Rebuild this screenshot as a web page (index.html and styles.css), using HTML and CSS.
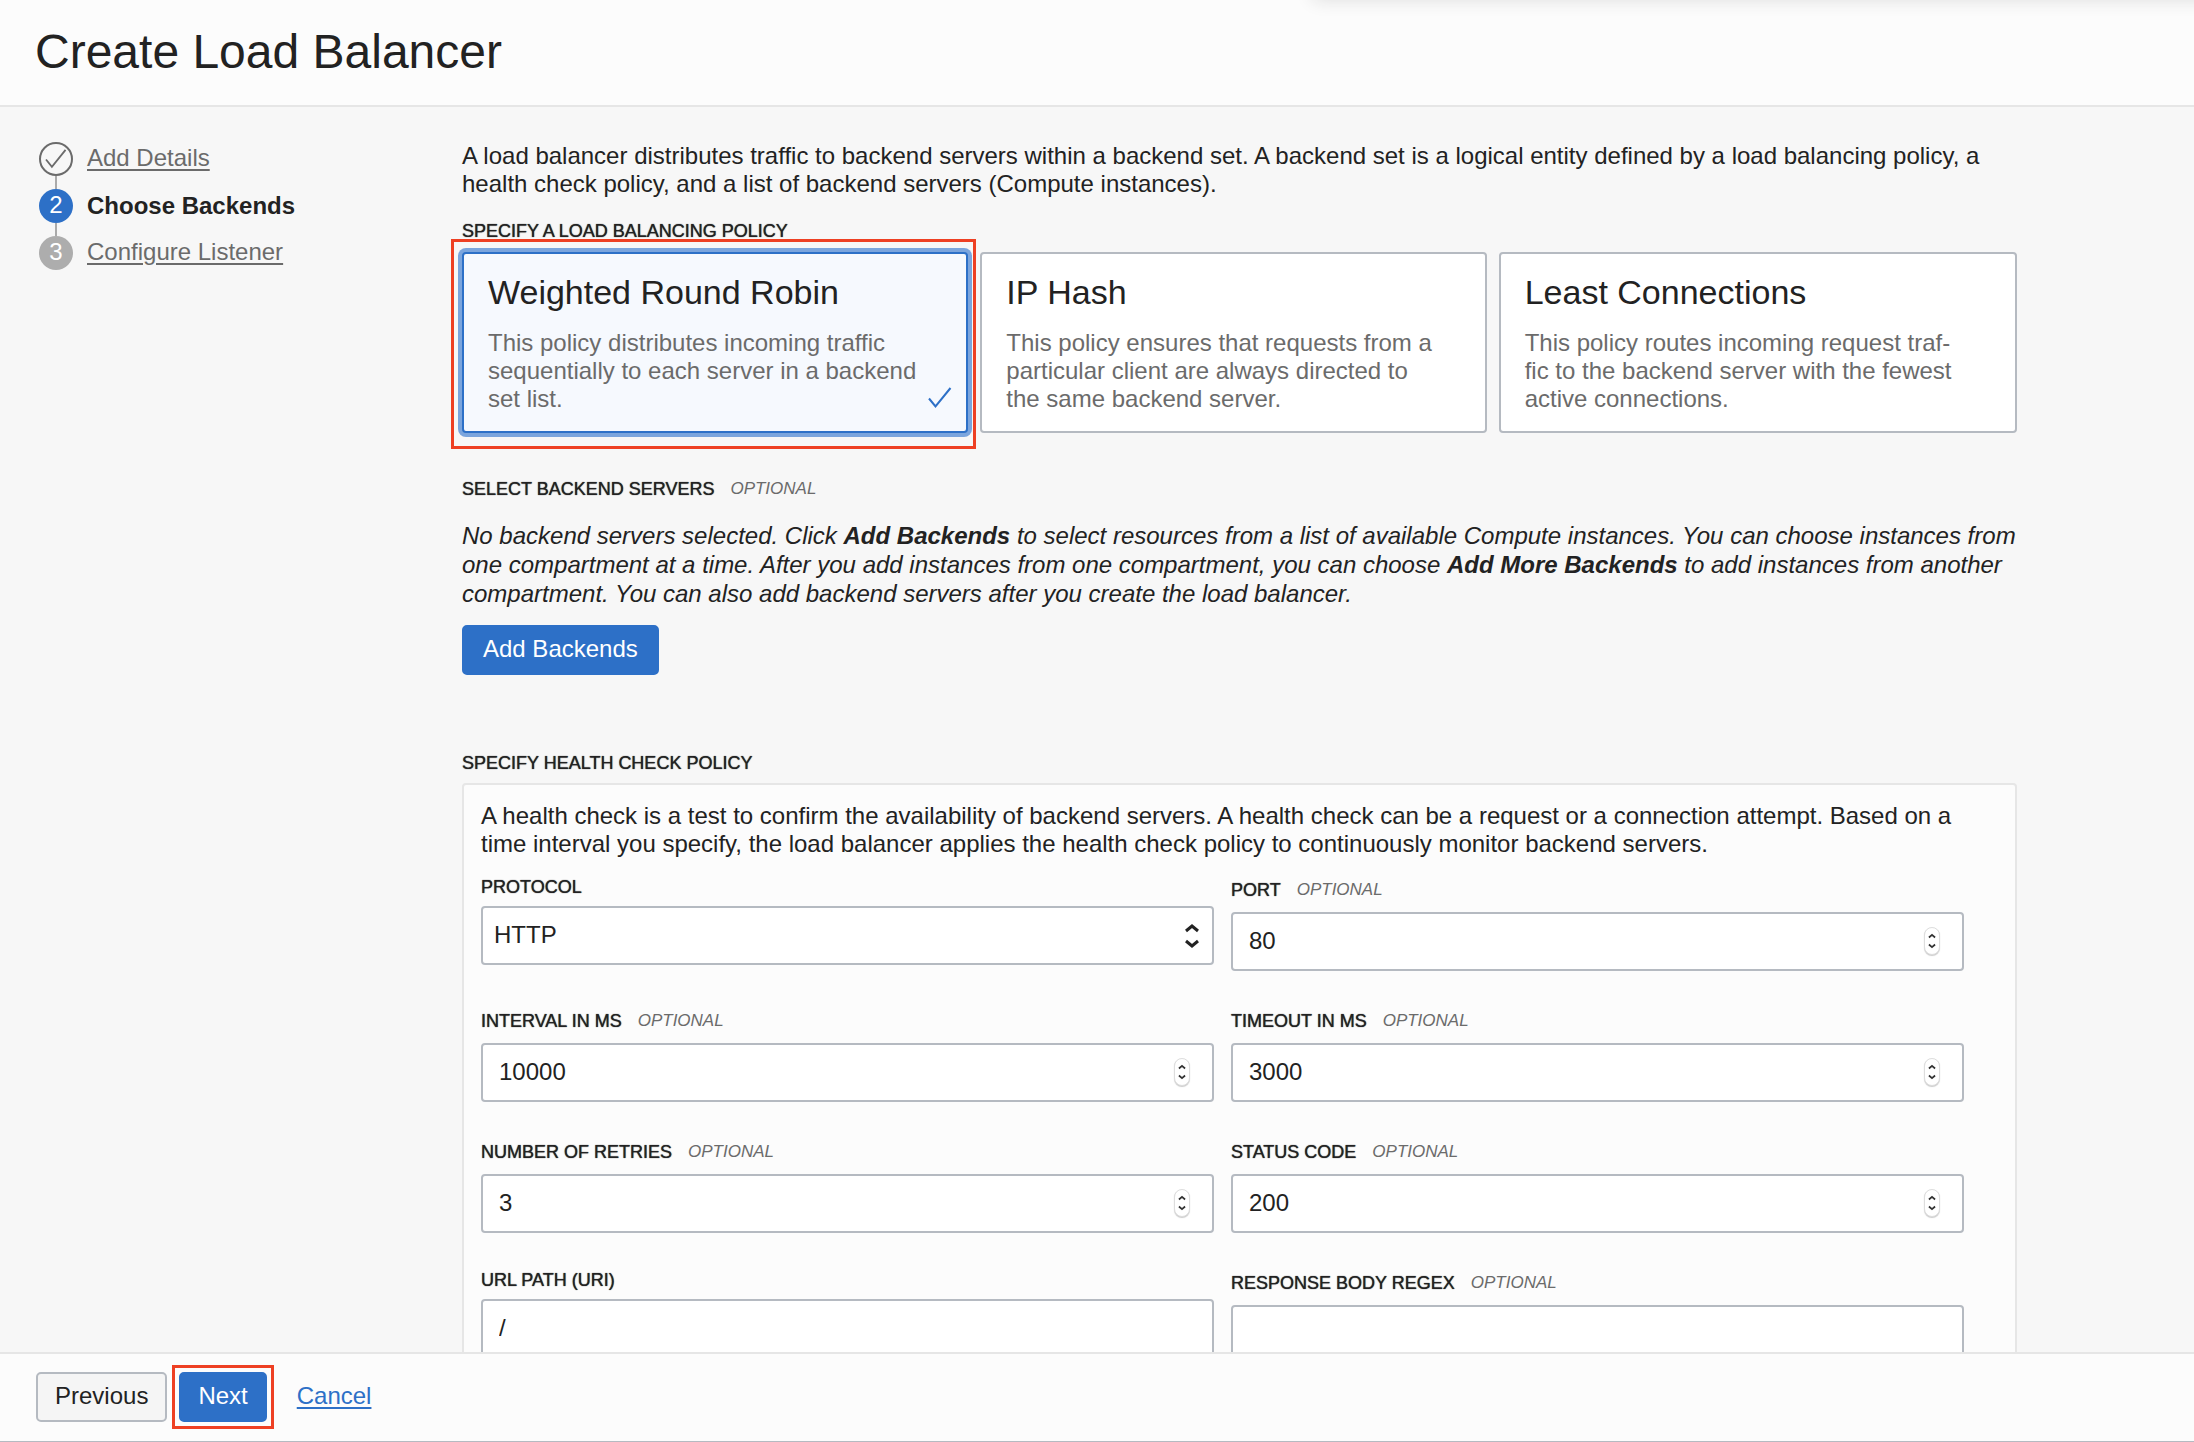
FILE: index.html
```html
<!DOCTYPE html>
<html lang="en">
<head>
<meta charset="utf-8">
<title>Create Load Balancer</title>
<link rel="stylesheet" href="styles.css">
</head>
<body>
<svg class="sprite" aria-hidden="true">
  <symbol id="check" viewBox="0 0 24 22"><path d="M1 11.500 L7.500 19.500 L22.500 1"/></symbol>
  <symbol id="updown" viewBox="0 0 16 26"><path d="M2 8 L8 3 L14 8 M2 18 L8 23 L14 18"/></symbol>
  <symbol id="stepper" viewBox="0 0 16 28"><path d="M4.500 10 L8 7 L11.500 10 M4.500 18 L8 21 L11.500 18"/></symbol>
</svg>
<header class="header"><h1 class="title">Create Load Balancer</h1></header>
<div class="body">
  <nav class="steps" aria-label="Steps">
    <ol class="step-list">
      <li class="step"><span class="dot done"><svg class="dot-check"><use href="#check"/></svg></span><a class="step-link" href="#">Add Details</a></li>
      <li class="step"><span class="dot current">2</span><span class="step-link active">Choose Backends</span></li>
      <li class="step"><span class="dot">3</span><a class="step-link" href="#">Configure Listener</a></li>
    </ol>
  </nav>
  <main class="main">
    <p class="text">A load balancer distributes traffic to backend servers within a backend set. A backend set is a logical entity defined by a load balancing policy, a health check policy, and a list of backend servers (Compute instances).</p>
    <h2 class="label policy-label">Specify a Load Balancing Policy</h2>
    <div class="cards" role="radiogroup">
      <label class="card selected marked"><input class="radio" type="radio" name="policy" checked>
        <span class="card-title">Weighted Round Robin</span>
        <span class="card-text">This policy distributes incoming traffic sequentially to each server in a backend set list.</span>
        <svg class="card-check"><use href="#check"/></svg></label>
      <label class="card"><input class="radio" type="radio" name="policy">
        <span class="card-title">IP Hash</span>
        <span class="card-text">This policy ensures that requests from a particular client are always directed to the same backend server.</span></label>
      <label class="card"><input class="radio" type="radio" name="policy">
        <span class="card-title">Least Connections</span>
        <span class="card-text">This policy routes incoming request traf&shy;fic to the backend server with the fewest active connections.</span></label>
    </div>
    <h2 class="label servers-label">Select Backend Servers <span class="optional">Optional</span></h2>
    <p class="note">No backend servers selected. Click <b>Add Backends</b> to select resources from a list of available Compute instances. You can choose instances from one compartment at a time. After you add instances from one compartment, you can choose <b>Add More Backends</b> to add instances from another compartment. You can also add backend servers after you create the load balancer.</p>
    <button class="button primary add" type="button">Add Backends</button>
    <h2 class="label">Specify Health Check Policy</h2>
    <section class="panel">
      <p class="text">A health check is a test to confirm the availability of backend servers. A health check can be a request or a connection attempt. Based on a time interval you specify, the load balancer applies the health check policy to continuously monitor backend servers.</p>
      <form class="fields">
        <div class="field"><label class="label" for="protocol">Protocol</label>
          <div class="control"><select class="input select" id="protocol"><option>HTTP</option><option>TCP</option></select><svg class="updown"><use href="#updown"/></svg></div></div>
        <div class="field"><label class="label tall" for="port">Port <span class="optional">Optional</span></label>
          <div class="control"><input class="input" id="port" type="number" value="80"><svg class="stepper"><use href="#stepper"/></svg></div></div>
        <div class="field"><label class="label tall" for="interval">Interval in ms <span class="optional">Optional</span></label>
          <div class="control"><input class="input" id="interval" type="number" value="10000"><svg class="stepper"><use href="#stepper"/></svg></div></div>
        <div class="field"><label class="label tall" for="timeout">Timeout in ms <span class="optional">Optional</span></label>
          <div class="control"><input class="input" id="timeout" type="number" value="3000"><svg class="stepper"><use href="#stepper"/></svg></div></div>
        <div class="field"><label class="label tall" for="retries">Number of retries <span class="optional">Optional</span></label>
          <div class="control"><input class="input" id="retries" type="number" value="3"><svg class="stepper"><use href="#stepper"/></svg></div></div>
        <div class="field"><label class="label tall" for="status">Status code <span class="optional">Optional</span></label>
          <div class="control"><input class="input" id="status" type="number" value="200"><svg class="stepper"><use href="#stepper"/></svg></div></div>
        <div class="field"><label class="label" for="url">URL path (URI)</label>
          <div class="control"><input class="input" id="url" type="text" value="/"></div></div>
        <div class="field"><label class="label tall" for="regex">Response body regex <span class="optional">Optional</span></label>
          <div class="control"><input class="input" id="regex" type="text"></div></div>
      </form>
    </section>
  </main>
</div>
<footer class="footer">
  <button class="button" type="button">Previous</button>
  <span class="marked next"><button class="button primary" type="button">Next</button></span>
  <a class="cancel" href="#">Cancel</a>
</footer>
</body>
</html>
```
FILE: styles.css
```css
* { box-sizing: border-box; }

body {
  margin: 0;
  height: 100vh;
  display: flex;
  flex-direction: column;
  overflow: hidden;
  background: #f7f7f7;
  color: #222;
  font: 24px/28px "Liberation Sans", Arial, sans-serif;
}

h1, h2, p { margin: 0; font-weight: normal; }
.sprite { position: absolute; width: 0; height: 0; }
svg { fill: none; stroke: currentColor; stroke-width: 2; }

/* Header */
.header {
  position: relative;
  flex: none;
  padding: 23px 35px 25px;
  overflow: hidden;
  border-bottom: 2px solid #e6e6e6;
  background: #fcfcfc;
}
.header::before {
  content: "";
  position: absolute;
  top: -20px;
  right: -40px;
  width: 42%;
  height: 20px;
  box-shadow: 0 0 18px #ddd;
}
.title { font-size: 48px; line-height: 57px; }

/* Body */
.body {
  flex: 1;
  min-height: 0;
  overflow: hidden;
  display: grid;
  grid-template-columns: 462px 1fr;
  padding: 35px 177px 0 0;
}

/* Steps */
.step-list {
  list-style: none;
  margin: 0;
  padding: 0 0 0 39px;
  display: flex;
  flex-direction: column;
  gap: 13px;
}
.step { position: relative; display: flex; gap: 14px; height: 34px; }
.step + .step::before {
  content: "";
  position: absolute;
  left: 16px;
  top: -13px;
  width: 2px;
  height: 13px;
  background: #aaa;
}
.dot {
  width: 34px;
  height: 34px;
  padding-bottom: 2px;
  display: flex;
  align-items: center;
  justify-content: center;
  border-radius: 50%;
  background: #adadad;
  color: #fff;
}
.dot.current { background: #2d70c7; }
.dot.done { padding: 0; border: 2px solid #6b6b6b; background: none; color: #6b6b6b; }
.dot-check { width: 22px; height: 20px; }
.step-link { padding-top: 2px; color: #6b6b6b; text-decoration-thickness: 2px; text-underline-offset: 3px; }
.step-link.active { padding-top: 3px; color: #222; font-weight: bold; }

/* Labels */
.label {
  display: flex;
  align-items: center;
  gap: 16px;
  font-size: 18px;
  line-height: 22px;
  text-transform: uppercase;
  text-shadow: 0 0 1px #222;
}
.label.tall { height: 28px; }
.optional { color: #6b6b6b; font-size: 17px; font-style: italic; text-shadow: none; }
.policy-label { margin-top: 22px; }

/* Policy cards */
.cards { display: grid; grid-template-columns: repeat(3, 1fr); margin-top: 10px; }
.card {
  position: relative;
  display: flex;
  flex-direction: column;
  gap: 17px;
  margin-right: 12px;
  padding: 18px 46px 18px 24px;
  border: 2px solid #b5bac1;
  border-radius: 4px;
  background: #fff;
}
.card:last-child { margin-right: 0; padding-right: 52px; }
.card.selected { border-color: #2d70c7; background: #f6f9fe; box-shadow: 0 0 0 4px #7ba5dd; }
.card-title { font-size: 34px; line-height: 40px; }
.card-text { color: #6b6b6b; hyphens: manual; }
.card-check { position: absolute; right: 14px; bottom: 22px; width: 24px; height: 22px; color: #2d70c7; }
.radio { position: absolute; opacity: 0; }

/* Red call-out frame */
.marked::after {
  content: "";
  position: absolute;
  inset: -15px -10px -18px -13px;
  border: 3px solid #ee4023;
}

.servers-label { margin-top: 45px; }
.note { margin-top: 21px; font-style: italic; line-height: 29px; }

/* Buttons */
.button {
  height: 50px;
  padding: 0 17px 2px;
  border: 2px solid #b5bac1;
  border-radius: 5px;
  background: #f5f5f5;
  color: #222;
  font: inherit;
}
.button.primary { border-color: #2d70c7; background: #2d70c7; color: #fff; }
.button.add { display: block; margin: 17px 0 77px; padding: 0 19px 2px; }

/* Health check panel */
.panel {
  margin-top: 9px;
  padding: 17px 51px 18px 17px;
  border: 2px solid #e6e6e6;
  border-radius: 4px;
  background: #fcfcfc;
}
.panel .text { margin-right: -33px; }
.fields { display: grid; grid-template-columns: 1fr 1fr; gap: 36px 17px; margin-top: 18px; }
.field { display: flex; flex-direction: column; gap: 8px; }
.control { position: relative; display: flex; }
.input {
  flex: 1;
  min-width: 0;
  height: 59px;
  padding: 0 16px 2px;
  border: 2px solid #b5bac1;
  border-radius: 4px;
  background: #fff;
  color: #222;
  font: inherit;
  appearance: none;
}
.input[type="number"] { appearance: textfield; }
.input::-webkit-inner-spin-button { display: none; }
.select { padding-left: 11px; }
.updown { position: absolute; right: 14px; top: 17px; width: 16px; height: 26px; stroke-width: 3; pointer-events: none; }
.stepper {
  position: absolute;
  right: 24px;
  top: 15px;
  width: 16px;
  height: 28px;
  border: 1px solid #ddd;
  border-radius: 8px;
  box-shadow: 0 1px 1px #ccc;
  background: #fff;
  color: #333;
  pointer-events: none;
}

/* Footer */
.footer {
  flex: none;
  display: flex;
  align-items: flex-start;
  padding: 18px 36px 19px;
  border-top: 2px solid #e6e6e6;
  border-bottom: 1px solid #b5bac1;
  background: #fcfcfc;
}
.next { position: relative; margin: 0 30px 0 12px; }
.next::after { inset: -7px; }
.cancel { margin-top: 10px; color: #2d70c7; text-decoration-thickness: 2px; text-underline-offset: 3px; }
```
